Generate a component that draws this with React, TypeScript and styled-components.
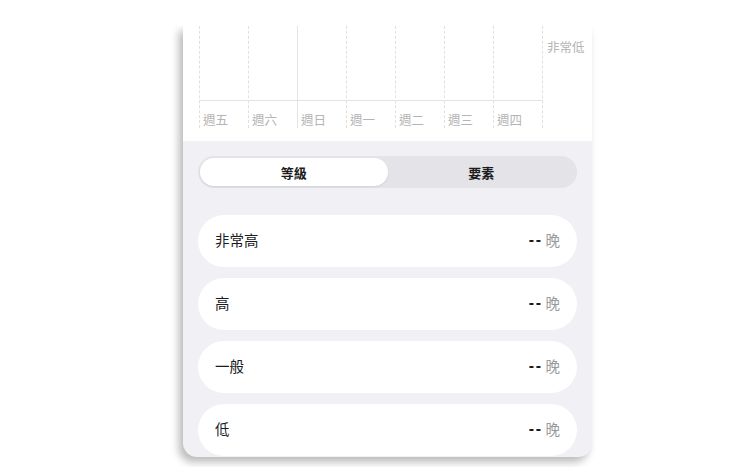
import styled, { createGlobalStyle } from "styled-components";

const Global = createGlobalStyle`
  html, body {
    margin: 0;
    padding: 0;
    background: #ffffff;
  }
  body {
    font-family: "Noto Sans CJK TC", "Noto Sans", sans-serif;
  }
`;

const Page = styled.div`
  width: 752px;
  height: 467px;
  display: flex;
  flex-direction: column;
  align-items: center;
  overflow: hidden;
`;

// white strip covering the part of the sheet scrolled above the view
const TopCover = styled.div`
  height: 26px;
  width: 100%;
  flex-shrink: 0;
  background: #ffffff;
  position: relative;
  z-index: 1;
`;

const Frame = styled.div`
  margin-left: 23px;
  width: 409px;
  height: 431px;
  flex-shrink: 0;
  display: flex;
  flex-direction: column;
  background: #f0f0f5;
  border-radius: 0 0 14px 14px;
  box-shadow: -4px 5px 9px rgba(0, 0, 0, 0.28);
  overflow: hidden;
`;

const ChartSection = styled.section`
  background: #ffffff;
  height: 115px;
  flex-shrink: 0;
  display: flex;
  padding-left: 16px;
`;

const Plot = styled.div`
  display: grid;
  grid-template-columns: repeat(7, 49px);
  border-right: 1px dashed #e0e0e0;
  height: 102px;
`;

const Column = styled.div<{ $solid?: boolean }>`
  display: grid;
  grid-template-rows: 75px 27px;
  border-left: 1px ${(p) => (p.$solid ? "solid #e4e4e4" : "dashed #e0e0e0")};
`;

const PlotCell = styled.div`
  border-bottom: 1px solid #e2e2e2;
`;

const DayLabel = styled.div`
  font-size: 12.5px;
  color: #b4b4b4;
  padding: 12px 0 0 3px;
  line-height: 14px;
  white-space: nowrap;
`;

const Axis = styled.div`
  padding: 13px 0 0 4px;
  font-size: 12.5px;
  line-height: 16px;
  color: #b4b4b4;
  white-space: nowrap;
`;

const Body = styled.section`
  padding: 15px 15px 0 15px;
  display: flex;
  flex-direction: column;
  gap: 11px;
`;

const Segmented = styled.div`
  display: grid;
  grid-template-columns: 1fr 1fr;
  background: #e3e3e8;
  border-radius: 16px;
  padding: 2px;
  height: 32px;
  box-sizing: border-box;
  margin-bottom: 16px;
`;

const Segment = styled.div<{ $active?: boolean }>`
  display: flex;
  align-items: center;
  justify-content: center;
  border-radius: 14px;
  font-size: 13px;
  font-weight: 700;
  color: #1c1c1e;
  background: ${(p) => (p.$active ? "#ffffff" : "transparent")};
  box-shadow: ${(p) => (p.$active ? "0 1px 2px rgba(0,0,0,0.08)" : "none")};
`;

const Row = styled.div`
  height: 52px;
  flex-shrink: 0;
  background: #ffffff;
  border-radius: 26px;
  display: flex;
  align-items: center;
  justify-content: space-between;
  padding: 0 17px 3px 17px;
  box-sizing: border-box;
  font-size: 14.5px;
  color: #1c1c1e;
`;

const Value = styled.span`
  display: flex;
  gap: 3px;
  align-items: center;
  b {
    font-family: "Liberation Sans", sans-serif;
    font-weight: 700;
    color: #1c1c1e;
    letter-spacing: 1.5px;
    font-size: 16px;
  }
  span {
    color: #9a9a9a;
  }
`;

const days = ["週五", "週六", "週日", "週一", "週二", "週三", "週四"];
const levels = ["非常高", "高", "一般", "低"];

export default function App() {
  return (
    <Page>
      <Global />
      <TopCover />
      <Frame>
        <ChartSection>
          <Plot>
            {days.map((d) => (
              <Column key={d} $solid={d === "週日"}>
                <PlotCell />
                <DayLabel>{d}</DayLabel>
              </Column>
            ))}
          </Plot>
          <Axis>非常低</Axis>
        </ChartSection>
        <Body>
          <Segmented>
            <Segment $active>等級</Segment>
            <Segment>要素</Segment>
          </Segmented>
          {levels.map((l) => (
            <Row key={l}>
              <span>{l}</span>
              <Value>
                <b>--</b>
                <span>晚</span>
              </Value>
            </Row>
          ))}
        </Body>
      </Frame>
    </Page>
  );
}
